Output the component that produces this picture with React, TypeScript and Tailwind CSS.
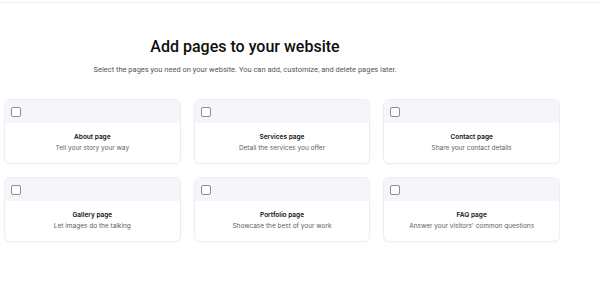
const pages = [
  { title: "About page", desc: "Tell your story your way" },
  { title: "Services page", desc: "Detail the services you offer" },
  { title: "Contact page", desc: "Share your contact details" },
  { title: "Gallery page", desc: "Let images do the talking" },
  { title: "Portfolio page", desc: "Showcase the best of your work" },
  { title: "FAQ page", desc: "Answer your visitors' common questions" },
];

function PageCard({ title, desc }: { title: string; desc: string }) {
  return (
    <div className="h-[65px] overflow-hidden rounded-[6px] border border-[#eceef2] bg-white shadow-[0_1px_2px_rgba(0,0,0,0.03)]">
      <div className="flex h-[23px] items-center bg-[#f5f6fa] px-[6px]">
        <span className="h-[10px] w-[10px] rounded-[2px] border border-[#8a8d94] bg-white" />
      </div>
      <div className="flex flex-col items-center pt-[9px] font-['Inter',sans-serif]">
        <span className="text-[6.5px] font-semibold leading-[11px] text-[#111]">{title}</span>
        <span className="text-[6.5px] leading-[11px] text-[#5b5e66]">{desc}</span>
      </div>
    </div>
  );
}

export default function App() {
  return (
    <div className="h-[294px] w-[600px] bg-white font-['Roboto',sans-serif]">
      <div className="h-[3px] border-b border-[#eeeff2]" />
      <div className="w-[490px] pt-[34px] text-center">
        <h1 className="text-[16px] font-medium leading-[20px] text-[#0d0d0d]">Add pages to your website</h1>
        <p className="mt-[7px] text-[7.5px] leading-[12px] text-[#555]">
          Select the pages you need on your website. You can add, customize, and delete pages later.
        </p>
      </div>
      <div className="grid w-[560px] grid-cols-3 gap-x-[13px] gap-y-[13px] pl-[4px] pt-[23px]">
        {pages.map((p) => (
          <PageCard key={p.title} title={p.title} desc={p.desc} />
        ))}
      </div>
    </div>
  );
}
